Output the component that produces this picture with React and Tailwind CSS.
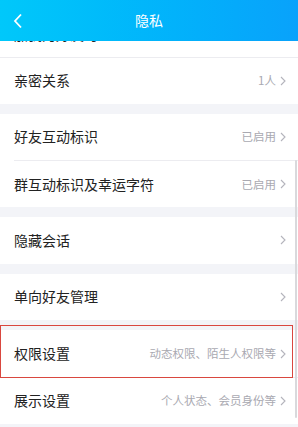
import React from 'react'

const Chevron = () => (
  <svg width="6" height="10" viewBox="0 0 6 10" className="shrink-0">
    <path d="M1 1 L5 5 L1 9" fill="none" stroke="#b4b4bc" strokeWidth="1.1" />
  </svg>
)

const Row = ({ label, value, divider }) => (
  <div className="h-[46.67px] bg-white flex items-stretch pl-[14px]">
    <div className={`flex-1 flex items-center justify-between pr-[12px] ${divider ? 'border-t border-[#ececf0]' : ''}`}>
      <span className="text-[14px] text-[#222]">{label}</span>
      <div className="flex items-center gap-[4px]">
        {value && <span className="text-[11.5px] text-[#a9a9b1]">{value}</span>}
        <Chevron />
      </div>
    </div>
  </div>
)

const Gap = () => <div className="h-[10px] bg-[#f3f4f8]" />

const App = () => {
  return (
    <div className="relative w-[298px] h-[427px] overflow-hidden bg-[#f3f4f8]" style={{ fontFamily: '"Noto Sans CJK SC", "Noto Sans", sans-serif' }}>
      <div className="relative z-10 h-[41px] flex items-center justify-center bg-gradient-to-r from-[#00c8fa] to-[#09a2fb]">
        <svg width="10" height="16" viewBox="0 0 10 16" className="absolute left-[13px] top-[13px]">
          <path d="M8 1.5 L2 8 L8 14.5" fill="none" stroke="#fff" strokeWidth="1.8" />
        </svg>
        <span className="text-[14px] text-white">隐私</span>
      </div>

      <div className="h-[17px] bg-white overflow-hidden pl-[14px] border-b border-[#ececf0]">
        <span className="block text-[14px] text-[#222] -mt-[17px] leading-[20px]">加我为好友时</span>
      </div>

      <div className="h-[45.67px] bg-white flex items-center justify-between pl-[14px] pr-[12px]">
        <span className="text-[14px] text-[#222]">亲密关系</span>
        <div className="flex items-center gap-[4px]">
          <span className="text-[11.5px] text-[#a9a9b1]">1人</span>
          <Chevron />
        </div>
      </div>
      <Gap />
      <Row label="好友互动标识" value="已启用" />
      <Row label="群互动标识及幸运字符" value="已启用" divider />
      <Gap />
      <Row label="隐藏会话" />
      <Gap />
      <Row label="单向好友管理" />
      <Gap />
      <div className="relative">
        <Row label="权限设置" value="动态权限、陌生人权限等" />
        <div className="absolute left-0 right-[5px] top-[-5px] bottom-[-1px] border-[1.5px] border-[#d9473f] pointer-events-none" />
      </div>
      <Row label="展示设置" value="个人状态、会员身份等" divider />
      <Gap />

      <div className="absolute right-[1px] top-[160px] h-[258px] w-[2px] bg-[#d9d9dc] rounded-full" />
    </div>
  )
}

export default App
